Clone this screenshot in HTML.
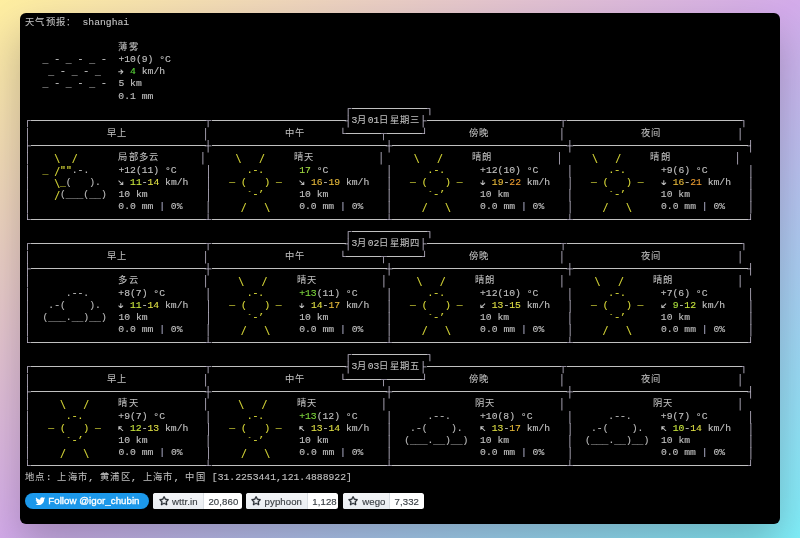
<!DOCTYPE html>
<html lang="zh-CN"><head><meta charset="utf-8"><style>
html,body{margin:0;padding:0}
body{width:800px;height:538px;overflow:hidden;position:relative;background:linear-gradient(to bottom right,#feeea0 0%,#d3abea 50%,#80f0fa 100%)}
.cbg{position:absolute;left:20px;top:13.4px;width:760px;height:510.8px;background:#000;border-radius:6px;box-shadow:0 20px 40px rgba(0,0,0,.22)}
.card{position:absolute;left:20px;top:13px;width:760px;height:510px;}
pre{position:absolute;left:4.7px;top:4.0px;margin:0;font-family:"Liberation Mono",monospace;font-size:9.72px;line-height:12.3px;color:#c0c0c0;white-space:pre;will-change:transform;-webkit-text-stroke:0.12px}
pre i{font-style:normal}
pre b{font-weight:normal}
.k{letter-spacing:1.33px;font-size:9.3px;position:relative;top:0px}
.a{display:inline-block;width:5.8326px;height:1px;position:relative}
.a svg{position:absolute;left:0;top:-4.2px;fill:none;stroke:currentColor;stroke-width:1.1px}
.x,.h{-webkit-text-stroke:0}
.x{color:#bcb6c8}
.k{-webkit-text-stroke:0.05px}
.u{position:relative;top:1px}
.r{display:inline-block;transform:scaleY(1.4);transform-origin:50% 0px}
.h{display:inline-block;height:1px;background:#c0c0c0;position:relative;top:-2px}
.x{font-size:11.2px;letter-spacing:-0.889px;line-height:0;position:relative;left:-0.98px;top:1.0px}
.tw{will-change:transform;position:absolute;left:4.8px;top:479.9px;width:124.4px;height:15.9px;border-radius:8px;background:#1c98ea;color:#fff;font-family:"Liberation Sans",sans-serif;font-size:9.75px;white-space:nowrap;-webkit-text-stroke:0.3px #fff}
.tw span{position:absolute;left:23.3px;top:2.1px;line-height:11px}
.gh{will-change:transform;position:absolute;top:480.1px;height:15.6px;border-radius:2.5px;overflow:hidden;background:#fff;font-family:"Liberation Sans",sans-serif;font-size:9.6px;font-weight:normal;letter-spacing:0.1px;-webkit-text-stroke:0.15px #3a3f44;color:#3a3f44;white-space:nowrap}
.gl{position:absolute;left:0;top:0;height:100%;background:linear-gradient(#f3f5f7,#e9edf1);border-right:1px solid #d9dee3;box-sizing:border-box}
.gt{position:absolute;top:2.5px;line-height:11px}
</style></head><body>
<div class="cbg"></div><div class="card">
<pre><i class=k>天气预报：</i> shanghai

                <i class=k>薄雾</i>
  <b style="color:#c6c6c6"> <i class=u>_</i> - <i class=u>_</i> - <i class=u>_</i> - </b> +10(9) °C
  <b style="color:#c6c6c6">  <i class=u>_</i> - <i class=u>_</i> - <i class=u>_</i>  </b> <i class=a><svg width="5.6" height="5.6" viewBox="0 0 6 6"><path d="M0.3 3H5.2M2.8 0.6L5.2 3L2.8 5.4"/></svg></i> <b style="color:#5ad83a">4</b> km/h
  <b style="color:#c6c6c6"> <i class=u>_</i> - <i class=u>_</i> - <i class=u>_</i> - </b> 5 km
                0.1 mm
                                                       <i class=x>┌</i><i class=h style="width:75.8238px"></i><i class=x>┐</i>
<i class=x>┌</i><i class=h style="width:174.9780px"></i><i class=x>┬</i><i class=h style="width:134.1498px"></i><i class=x>┤</i>3<i class=k>月</i>01<i class=k>日星期三</i><i class=x>├</i><i class=h style="width:134.1498px"></i><i class=x>┬</i><i class=h style="width:174.9780px"></i><i class=x>┐</i>
<i class=x>│</i>             <i class=k>早上</i>             <i class=x>│</i>             <i class=k>中午</i>      <i class=x>└</i><i class=h style="width:34.9956px"></i><i class=x>┬</i><i class=h style="width:34.9956px"></i><i class=x>┘</i>       <i class=k>傍晚</i>            <i class=x>│</i>             <i class=k>夜间</i>             <i class=x>│</i>
<i class=x>├</i><i class=h style="width:174.9780px"></i><i class=x>┼</i><i class=h style="width:174.9780px"></i><i class=x>┼</i><i class=h style="width:174.9780px"></i><i class=x>┼</i><i class=h style="width:174.9780px"></i><i class=x>┤</i>
<i class=x>│</i> <b style="color:#dede3a">   <i class=r>\</i>  <i class=r>/</i></b>       <i class=k>局部多云</i>       <i class=x>│</i> <b style="color:#dede3a">    <i class=r>\</i>   <i class=r>/</i>    </b> <i class=k>晴天</i>           <i class=x>│</i> <b style="color:#dede3a">    <i class=r>\</i>   <i class=r>/</i>    </b> <i class=k>晴朗</i>           <i class=x>│</i> <b style="color:#dede3a">    <i class=r>\</i>   <i class=r>/</i>    </b> <i class=k>晴朗</i>           <i class=x>│</i>
<i class=x>│</i> <b style="color:#dede3a"> <i class=u>_</i> <i class=r>/</i>""</b><b style="color:#bcbcbc">.-.    </b> +12(11) °C     <i class=x>│</i> <b style="color:#dede3a">     .-.     </b> <b style="color:#a0d840">17</b> °C          <i class=x>│</i> <b style="color:#dede3a">     .-.     </b> +12(10) °C     <i class=x>│</i> <b style="color:#dede3a">     .-.     </b> +9(6) °C       <i class=x>│</i>
<i class=x>│</i> <b style="color:#dede3a">   <i class=r>\</i><i class=u>_</i></b><b style="color:#bcbcbc">(   ).  </b> <i class=a><svg width="5.6" height="5.6" viewBox="0 0 6 6"><path d="M0.6 0.6L5.1 5.1M5.1 1.9V5.1H1.9"/></svg></i> <b style="color:#c4e03c">11</b>-<b style="color:#dede44">14</b> km/h   <i class=x>│</i> <b style="color:#dede3a">  ― (   ) ―  </b> <i class=a><svg width="5.6" height="5.6" viewBox="0 0 6 6"><path d="M0.6 0.6L5.1 5.1M5.1 1.9V5.1H1.9"/></svg></i> <b style="color:#e4b83a">16</b>-<b style="color:#e4b83a">19</b> km/h   <i class=x>│</i> <b style="color:#dede3a">  ― (   ) ―  </b> <i class=a><svg width="5.6" height="5.6" viewBox="0 0 6 6"><path d="M3 0.3V5.2M0.6 2.8L3 5.2L5.4 2.8"/></svg></i> <b style="color:#e4b83a">19</b>-<b style="color:#e89a30">22</b> km/h   <i class=x>│</i> <b style="color:#dede3a">  ― (   ) ―  </b> <i class=a><svg width="5.6" height="5.6" viewBox="0 0 6 6"><path d="M3 0.3V5.2M0.6 2.8L3 5.2L5.4 2.8"/></svg></i> <b style="color:#e4b83a">16</b>-<b style="color:#e89a30">21</b> km/h   <i class=x>│</i>
<i class=x>│</i> <b style="color:#dede3a">   <i class=r>/</i></b><b style="color:#bcbcbc">(<i class=u>___</i>(<i class=u>__</i>) </b> 10 km          <i class=x>│</i> <b style="color:#dede3a">     `-’     </b> 10 km          <i class=x>│</i> <b style="color:#dede3a">     `-’     </b> 10 km          <i class=x>│</i> <b style="color:#dede3a">     `-’     </b> 10 km          <i class=x>│</i>
<i class=x>│</i>               0.0 mm <b style="color:#a8a8c0">|</b> 0%    <i class=x>│</i> <b style="color:#dede3a">    <i class=r>/</i>   <i class=r>\</i>    </b> 0.0 mm <b style="color:#a8a8c0">|</b> 0%    <i class=x>│</i> <b style="color:#dede3a">    <i class=r>/</i>   <i class=r>\</i>    </b> 0.0 mm <b style="color:#a8a8c0">|</b> 0%    <i class=x>│</i> <b style="color:#dede3a">    <i class=r>/</i>   <i class=r>\</i>    </b> 0.0 mm <b style="color:#a8a8c0">|</b> 0%    <i class=x>│</i>
<i class=x>└</i><i class=h style="width:174.9780px"></i><i class=x>┴</i><i class=h style="width:174.9780px"></i><i class=x>┴</i><i class=h style="width:174.9780px"></i><i class=x>┴</i><i class=h style="width:174.9780px"></i><i class=x>┘</i>
                                                       <i class=x>┌</i><i class=h style="width:75.8238px"></i><i class=x>┐</i>
<i class=x>┌</i><i class=h style="width:174.9780px"></i><i class=x>┬</i><i class=h style="width:134.1498px"></i><i class=x>┤</i>3<i class=k>月</i>02<i class=k>日星期四</i><i class=x>├</i><i class=h style="width:134.1498px"></i><i class=x>┬</i><i class=h style="width:174.9780px"></i><i class=x>┐</i>
<i class=x>│</i>             <i class=k>早上</i>             <i class=x>│</i>             <i class=k>中午</i>      <i class=x>└</i><i class=h style="width:34.9956px"></i><i class=x>┬</i><i class=h style="width:34.9956px"></i><i class=x>┘</i>       <i class=k>傍晚</i>            <i class=x>│</i>             <i class=k>夜间</i>             <i class=x>│</i>
<i class=x>├</i><i class=h style="width:174.9780px"></i><i class=x>┼</i><i class=h style="width:174.9780px"></i><i class=x>┼</i><i class=h style="width:174.9780px"></i><i class=x>┼</i><i class=h style="width:174.9780px"></i><i class=x>┤</i>
<i class=x>│</i>               <i class=k>多云</i>           <i class=x>│</i> <b style="color:#dede3a">    <i class=r>\</i>   <i class=r>/</i>    </b> <i class=k>晴天</i>           <i class=x>│</i> <b style="color:#dede3a">    <i class=r>\</i>   <i class=r>/</i>    </b> <i class=k>晴朗</i>           <i class=x>│</i> <b style="color:#dede3a">    <i class=r>\</i>   <i class=r>/</i>    </b> <i class=k>晴朗</i>           <i class=x>│</i>
<i class=x>│</i> <b style="color:#bcbcbc">     .--.    </b> +8(7) °C       <i class=x>│</i> <b style="color:#dede3a">     .-.     </b> <b style="color:#7cd43c">+13</b>(11) °C     <i class=x>│</i> <b style="color:#dede3a">     .-.     </b> +12(10) °C     <i class=x>│</i> <b style="color:#dede3a">     .-.     </b> +7(6) °C       <i class=x>│</i>
<i class=x>│</i> <b style="color:#bcbcbc">  .-(    ).  </b> <i class=a><svg width="5.6" height="5.6" viewBox="0 0 6 6"><path d="M3 0.3V5.2M0.6 2.8L3 5.2L5.4 2.8"/></svg></i> <b style="color:#c4e03c">11</b>-<b style="color:#dede44">14</b> km/h   <i class=x>│</i> <b style="color:#dede3a">  ― (   ) ―  </b> <i class=a><svg width="5.6" height="5.6" viewBox="0 0 6 6"><path d="M3 0.3V5.2M0.6 2.8L3 5.2L5.4 2.8"/></svg></i> <b style="color:#dede44">14</b>-<b style="color:#e4b83a">17</b> km/h   <i class=x>│</i> <b style="color:#dede3a">  ― (   ) ―  </b> <i class=a><svg width="5.6" height="5.6" viewBox="0 0 6 6"><path d="M5.4 0.6L0.9 5.1M0.9 1.9V5.1H4.1"/></svg></i> <b style="color:#dede44">13</b>-<b style="color:#dede44">15</b> km/h   <i class=x>│</i> <b style="color:#dede3a">  ― (   ) ―  </b> <i class=a><svg width="5.6" height="5.6" viewBox="0 0 6 6"><path d="M5.4 0.6L0.9 5.1M0.9 1.9V5.1H4.1"/></svg></i> <b style="color:#a8dc3c">9</b>-<b style="color:#c4e03c">12</b> km/h    <i class=x>│</i>
<i class=x>│</i> <b style="color:#bcbcbc"> (<i class=u>___</i>.<i class=u>__</i>)<i class=u>__</i>) </b> 10 km          <i class=x>│</i> <b style="color:#dede3a">     `-’     </b> 10 km          <i class=x>│</i> <b style="color:#dede3a">     `-’     </b> 10 km          <i class=x>│</i> <b style="color:#dede3a">     `-’     </b> 10 km          <i class=x>│</i>
<i class=x>│</i>               0.0 mm <b style="color:#a8a8c0">|</b> 0%    <i class=x>│</i> <b style="color:#dede3a">    <i class=r>/</i>   <i class=r>\</i>    </b> 0.0 mm <b style="color:#a8a8c0">|</b> 0%    <i class=x>│</i> <b style="color:#dede3a">    <i class=r>/</i>   <i class=r>\</i>    </b> 0.0 mm <b style="color:#a8a8c0">|</b> 0%    <i class=x>│</i> <b style="color:#dede3a">    <i class=r>/</i>   <i class=r>\</i>    </b> 0.0 mm <b style="color:#a8a8c0">|</b> 0%    <i class=x>│</i>
<i class=x>└</i><i class=h style="width:174.9780px"></i><i class=x>┴</i><i class=h style="width:174.9780px"></i><i class=x>┴</i><i class=h style="width:174.9780px"></i><i class=x>┴</i><i class=h style="width:174.9780px"></i><i class=x>┘</i>
                                                       <i class=x>┌</i><i class=h style="width:75.8238px"></i><i class=x>┐</i>
<i class=x>┌</i><i class=h style="width:174.9780px"></i><i class=x>┬</i><i class=h style="width:134.1498px"></i><i class=x>┤</i>3<i class=k>月</i>03<i class=k>日星期五</i><i class=x>├</i><i class=h style="width:134.1498px"></i><i class=x>┬</i><i class=h style="width:174.9780px"></i><i class=x>┐</i>
<i class=x>│</i>             <i class=k>早上</i>             <i class=x>│</i>             <i class=k>中午</i>      <i class=x>└</i><i class=h style="width:34.9956px"></i><i class=x>┬</i><i class=h style="width:34.9956px"></i><i class=x>┘</i>       <i class=k>傍晚</i>            <i class=x>│</i>             <i class=k>夜间</i>             <i class=x>│</i>
<i class=x>├</i><i class=h style="width:174.9780px"></i><i class=x>┼</i><i class=h style="width:174.9780px"></i><i class=x>┼</i><i class=h style="width:174.9780px"></i><i class=x>┼</i><i class=h style="width:174.9780px"></i><i class=x>┤</i>
<i class=x>│</i> <b style="color:#dede3a">    <i class=r>\</i>   <i class=r>/</i>    </b> <i class=k>晴天</i>           <i class=x>│</i> <b style="color:#dede3a">    <i class=r>\</i>   <i class=r>/</i>    </b> <i class=k>晴天</i>           <i class=x>│</i>               <i class=k>阴天</i>           <i class=x>│</i>               <i class=k>阴天</i>           <i class=x>│</i>
<i class=x>│</i> <b style="color:#dede3a">     .-.     </b> +9(7) °C       <i class=x>│</i> <b style="color:#dede3a">     .-.     </b> <b style="color:#7cd43c">+13</b>(12) °C     <i class=x>│</i> <b style="color:#bcbcbc">     .--.    </b> +10(8) °C      <i class=x>│</i> <b style="color:#bcbcbc">     .--.    </b> +9(7) °C       <i class=x>│</i>
<i class=x>│</i> <b style="color:#dede3a">  ― (   ) ―  </b> <i class=a><svg width="5.6" height="5.6" viewBox="0 0 6 6"><path d="M5.4 5.4L0.9 0.9M0.9 4.1V0.9H4.1"/></svg></i> <b style="color:#c4e03c">12</b>-<b style="color:#dede44">13</b> km/h   <i class=x>│</i> <b style="color:#dede3a">  ― (   ) ―  </b> <i class=a><svg width="5.6" height="5.6" viewBox="0 0 6 6"><path d="M5.4 5.4L0.9 0.9M0.9 4.1V0.9H4.1"/></svg></i> <b style="color:#dede44">13</b>-<b style="color:#dede44">14</b> km/h   <i class=x>│</i> <b style="color:#bcbcbc">  .-(    ).  </b> <i class=a><svg width="5.6" height="5.6" viewBox="0 0 6 6"><path d="M5.4 5.4L0.9 0.9M0.9 4.1V0.9H4.1"/></svg></i> <b style="color:#dede44">13</b>-<b style="color:#e4b83a">17</b> km/h   <i class=x>│</i> <b style="color:#bcbcbc">  .-(    ).  </b> <i class=a><svg width="5.6" height="5.6" viewBox="0 0 6 6"><path d="M5.4 5.4L0.9 0.9M0.9 4.1V0.9H4.1"/></svg></i> <b style="color:#c4e03c">10</b>-<b style="color:#dede44">14</b> km/h   <i class=x>│</i>
<i class=x>│</i> <b style="color:#dede3a">     `-’     </b> 10 km          <i class=x>│</i> <b style="color:#dede3a">     `-’     </b> 10 km          <i class=x>│</i> <b style="color:#bcbcbc"> (<i class=u>___</i>.<i class=u>__</i>)<i class=u>__</i>) </b> 10 km          <i class=x>│</i> <b style="color:#bcbcbc"> (<i class=u>___</i>.<i class=u>__</i>)<i class=u>__</i>) </b> 10 km          <i class=x>│</i>
<i class=x>│</i> <b style="color:#dede3a">    <i class=r>/</i>   <i class=r>\</i>    </b> 0.0 mm <b style="color:#a8a8c0">|</b> 0%    <i class=x>│</i> <b style="color:#dede3a">    <i class=r>/</i>   <i class=r>\</i>    </b> 0.0 mm <b style="color:#a8a8c0">|</b> 0%    <i class=x>│</i>               0.0 mm <b style="color:#a8a8c0">|</b> 0%    <i class=x>│</i>               0.0 mm <b style="color:#a8a8c0">|</b> 0%    <i class=x>│</i>
<i class=x>└</i><i class=h style="width:174.9780px"></i><i class=x>┴</i><i class=h style="width:174.9780px"></i><i class=x>┴</i><i class=h style="width:174.9780px"></i><i class=x>┴</i><i class=h style="width:174.9780px"></i><i class=x>┘</i>
<i class=k>地点</i>: <i class=k>上海市</i>, <i class=k>黄浦区</i>, <i class=k>上海市</i>, <i class=k>中国</i> [31.2253441,121.4888922]</pre>
<div class="tw"><svg width="10.3" height="10.3" viewBox="0 0 24 24" style="position:absolute;left:10.4px;top:2.5px"><path fill="#fff" d="M23.643 4.937c-.835.37-1.732.62-2.675.733.962-.576 1.7-1.49 2.048-2.578-.9.534-1.897.922-2.958 1.13-.85-.904-2.06-1.47-3.4-1.47-2.572 0-4.658 2.086-4.658 4.66 0 .364.042.718.12 1.06-3.873-.195-7.304-2.05-9.602-4.868-.4.69-.63 1.49-.63 2.342 0 1.616.823 3.043 2.072 3.878-.764-.025-1.482-.234-2.11-.583v.06c0 2.257 1.605 4.14 3.737 4.568-.392.106-.803.162-1.227.162-.3 0-.593-.028-.877-.082.593 1.85 2.313 3.198 4.352 3.234-1.595 1.25-3.604 1.995-5.786 1.995-.376 0-.747-.022-1.112-.065 2.062 1.323 4.51 2.093 7.14 2.093 8.57 0 13.255-7.098 13.255-13.254 0-.2-.005-.402-.014-.602.91-.658 1.7-1.477 2.323-2.41z"/></svg><span>Follow @igor_chubin</span></div>
<div class=gh style="left:133.10px;width:88.80px"><div class=gl style="width:50.90px"></div><svg width="10.20" height="10.20" viewBox="0 0 16 16" style="position:absolute;left:5.50px;top:3.30px"><path fill="#24292f" stroke="#24292f" stroke-width="0.5" d="M8 .25a.75.75 0 0 1 .673.418l1.882 3.815 4.21.612a.75.75 0 0 1 .416 1.279l-3.046 2.97.719 4.192a.751.751 0 0 1-1.088.791L8 12.347l-3.766 1.98a.75.75 0 0 1-1.088-.79l.72-4.194L.818 6.374a.75.75 0 0 1 .416-1.28l4.21-.611L7.327.668A.75.75 0 0 1 8 .25Zm0 2.445L6.615 5.5a.75.75 0 0 1-.564.41l-3.097.45 2.24 2.184a.75.75 0 0 1 .216.664l-.528 3.084 2.769-1.456a.75.75 0 0 1 .698 0l2.77 1.456-.53-3.084a.75.75 0 0 1 .216-.664l2.24-2.183-3.096-.45a.75.75 0 0 1-.564-.41L8 2.694Z"/></svg><span class=gt style="left:18.90px">wttr.in</span><span class=gt style="left:55.40px">20,860</span></div><div class=gh style="left:226.25px;width:91.85px"><div class=gl style="width:61.75px"></div><svg width="10.20" height="10.20" viewBox="0 0 16 16" style="position:absolute;left:4.85px;top:3.30px"><path fill="#24292f" stroke="#24292f" stroke-width="0.5" d="M8 .25a.75.75 0 0 1 .673.418l1.882 3.815 4.21.612a.75.75 0 0 1 .416 1.279l-3.046 2.97.719 4.192a.751.751 0 0 1-1.088.791L8 12.347l-3.766 1.98a.75.75 0 0 1-1.088-.79l.72-4.194L.818 6.374a.75.75 0 0 1 .416-1.28l4.21-.611L7.327.668A.75.75 0 0 1 8 .25Zm0 2.445L6.615 5.5a.75.75 0 0 1-.564.41l-3.097.45 2.24 2.184a.75.75 0 0 1 .216.664l-.528 3.084 2.769-1.456a.75.75 0 0 1 .698 0l2.77 1.456-.53-3.084a.75.75 0 0 1 .216-.664l2.24-2.183-3.096-.45a.75.75 0 0 1-.564-.41L8 2.694Z"/></svg><span class=gt style="left:18.55px">pyphoon</span><span class=gt style="left:66.25px">1,128</span></div><div class=gh style="left:322.50px;width:80.60px"><div class=gl style="width:47.25px"></div><svg width="10.20" height="10.20" viewBox="0 0 16 16" style="position:absolute;left:5.20px;top:3.30px"><path fill="#24292f" stroke="#24292f" stroke-width="0.5" d="M8 .25a.75.75 0 0 1 .673.418l1.882 3.815 4.21.612a.75.75 0 0 1 .416 1.279l-3.046 2.97.719 4.192a.751.751 0 0 1-1.088.791L8 12.347l-3.766 1.98a.75.75 0 0 1-1.088-.79l.72-4.194L.818 6.374a.75.75 0 0 1 .416-1.28l4.21-.611L7.327.668A.75.75 0 0 1 8 .25Zm0 2.445L6.615 5.5a.75.75 0 0 1-.564.41l-3.097.45 2.24 2.184a.75.75 0 0 1 .216.664l-.528 3.084 2.769-1.456a.75.75 0 0 1 .698 0l2.77 1.456-.53-3.084a.75.75 0 0 1 .216-.664l2.24-2.183-3.096-.45a.75.75 0 0 1-.564-.41L8 2.694Z"/></svg><span class=gt style="left:19.20px">wego</span><span class=gt style="left:51.50px">7,332</span></div>
</div>
</body></html>
